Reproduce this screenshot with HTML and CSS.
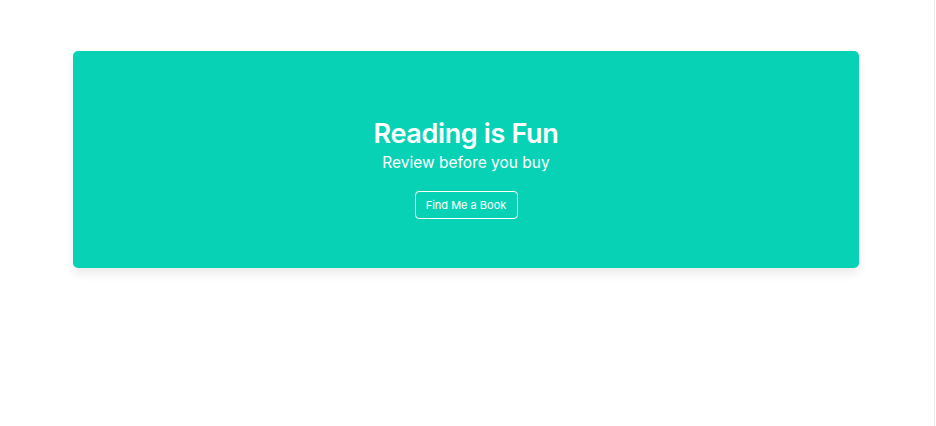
FILE: index.html
```html
<!DOCTYPE html>
<html lang="en">
<head>
<meta charset="utf-8">
<title>Reading is Fun</title>
<link rel="stylesheet" href="styles.css">
</head>
<body>
<div class="page">
  <section class="hero">
    <h1 class="hero-title">Reading is Fun</h1>
    <p class="hero-subtitle">Review before you buy</p>
    <button class="hero-button" type="button">Find Me a Book</button>
  </section>
</div>
</body>
</html>
```

FILE: styles.css
```css
html, body {
  margin: 0;
  padding: 0;
  background: #ffffff;
}
body {
  font-family: Inter, "Noto Sans", sans-serif;
}
.page {
  box-sizing: border-box;
  width: 935px;
  height: 426px;
  border-right: 1px solid #e8e8e8;
  padding: 51px 0 0 73px;
}
.hero {
  box-sizing: border-box;
  width: 786px;
  height: 217px;
  background: #08d2b5;
  border-radius: 5px;
  box-shadow: 0 6px 10px rgba(0, 0, 0, 0.08);
  display: flex;
  flex-direction: column;
  align-items: center;
  padding-top: 65px;
  color: #ffffff;
}
.hero-title {
  margin: 0;
  font-size: 27px;
  font-weight: 600;
  line-height: 36px;
  letter-spacing: -0.35px;
}
.hero-subtitle {
  margin: 0;
  font-size: 15.5px;
  font-weight: 400;
  line-height: 22px;
}
.hero-button {
  margin-top: 17px;
  box-sizing: border-box;
  height: 28px;
  width: 103px;
  padding: 0;
  background: transparent;
  border: 1px solid #ffffff;
  border-radius: 4px;
  color: #ffffff;
  font-family: Inter, "Noto Sans", sans-serif;
  font-size: 11px;
  line-height: 26px;
}
```
